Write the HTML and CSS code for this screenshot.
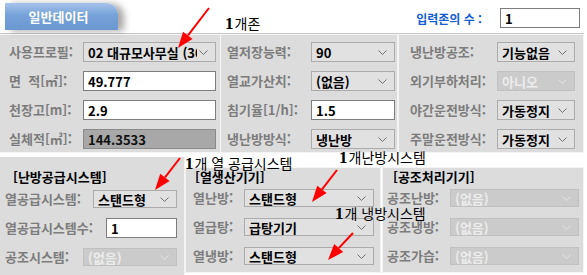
FILE: index.html
```html
<!DOCTYPE html>
<html lang="ko">
<head>
<meta charset="utf-8">
<title>일반데이터</title>
<link rel="stylesheet" href="styles.css">
</head>
<body>
<div class="page">
  <header class="top">
    <div class="tab">일반데이터</div>
    <div class="zone">
      <span class="zone-label">입력존의 수 :</span>
      <div class="field field-zone">1</div>
    </div>
  </header>

  <section class="main">
    <div class="col col1">
      <div class="row"><span class="lbl">사용프로필:</span><div class="sel"><span class="val">02 대규모사무실 (30</span><svg class="chev" viewBox="0 0 9 5"><polyline points="0.5,0.5 4.5,4.5 8.5,0.5"/></svg></div></div>
      <div class="row"><span class="lbl">면&nbsp;&nbsp;적[㎡]:</span><div class="field">49.777</div></div>
      <div class="row"><span class="lbl">천장고[m]:</span><div class="field">2.9</div></div>
      <div class="row"><span class="lbl">실체적[㎥]:</span><div class="field field-ro">144.3533</div></div>
    </div>
    <div class="col col2">
      <div class="row"><span class="lbl">열저장능력:</span><div class="sel"><span class="val">90</span><svg class="chev" viewBox="0 0 9 5"><polyline points="0.5,0.5 4.5,4.5 8.5,0.5"/></svg></div></div>
      <div class="row"><span class="lbl">열교가산치:</span><div class="sel"><span class="val">(없음)</span><svg class="chev" viewBox="0 0 9 5"><polyline points="0.5,0.5 4.5,4.5 8.5,0.5"/></svg></div></div>
      <div class="row"><span class="lbl">침기율[1/h]:</span><div class="field">1.5</div></div>
      <div class="row"><span class="lbl">냉난방방식:</span><div class="sel"><span class="val">냉난방</span><svg class="chev" viewBox="0 0 9 5"><polyline points="0.5,0.5 4.5,4.5 8.5,0.5"/></svg></div></div>
    </div>
    <div class="col col3">
      <div class="row"><span class="lbl">냉난방공조:</span><div class="sel"><span class="val">기능없음</span><svg class="chev" viewBox="0 0 9 5"><polyline points="0.5,0.5 4.5,4.5 8.5,0.5"/></svg></div></div>
      <div class="row"><span class="lbl">외기부하처리:</span><div class="sel sel-off"><span class="val">아니오</span><svg class="chev" viewBox="0 0 9 5"><polyline points="0.5,0.5 4.5,4.5 8.5,0.5"/></svg></div></div>
      <div class="row"><span class="lbl">야간운전방식:</span><div class="sel"><span class="val">가동정지</span><svg class="chev" viewBox="0 0 9 5"><polyline points="0.5,0.5 4.5,4.5 8.5,0.5"/></svg></div></div>
      <div class="row"><span class="lbl">주말운전방식:</span><div class="sel"><span class="val">가동정지</span><svg class="chev" viewBox="0 0 9 5"><polyline points="0.5,0.5 4.5,4.5 8.5,0.5"/></svg></div></div>
    </div>
  </section>

  <section class="lower">
    <div class="panel p1">
      <div class="ptitle">[난방공급시스템]</div>
      <div class="row r1"><span class="lbl">열공급시스템:</span><div class="sel"><span class="val">스탠드형</span><svg class="chev" viewBox="0 0 9 5"><polyline points="0.5,0.5 4.5,4.5 8.5,0.5"/></svg></div></div>
      <div class="row r2"><span class="lbl">열공급시스템수:</span><div class="field">1</div></div>
      <div class="row r3"><span class="lbl">공조시스템:</span><div class="sel sel-off"><span class="val">(없음)</span><svg class="chev" viewBox="0 0 9 5"><polyline points="0.5,0.5 4.5,4.5 8.5,0.5"/></svg></div></div>
    </div>
    <div class="panel p2">
      <div class="ptitle">[열생산기기]</div>
      <div class="row"><span class="lbl">열난방:</span><div class="sel"><span class="val">스탠드형</span><svg class="chev" viewBox="0 0 9 5"><polyline points="0.5,0.5 4.5,4.5 8.5,0.5"/></svg></div></div>
      <div class="row"><span class="lbl">열급탕:</span><div class="sel"><span class="val">급탕기기</span><svg class="chev" viewBox="0 0 9 5"><polyline points="0.5,0.5 4.5,4.5 8.5,0.5"/></svg></div></div>
      <div class="row"><span class="lbl">열냉방:</span><div class="sel"><span class="val">스탠드형</span><svg class="chev" viewBox="0 0 9 5"><polyline points="0.5,0.5 4.5,4.5 8.5,0.5"/></svg></div></div>
    </div>
    <div class="panel p3">
      <div class="ptitle">[공조처리기기]</div>
      <div class="row"><span class="lbl">공조난방:</span><div class="sel sel-off"><span class="val">(없음)</span><svg class="chev" viewBox="0 0 9 5"><polyline points="0.5,0.5 4.5,4.5 8.5,0.5"/></svg></div></div>
      <div class="row"><span class="lbl">공조냉방:</span><div class="sel sel-off"><span class="val">(없음)</span><svg class="chev" viewBox="0 0 9 5"><polyline points="0.5,0.5 4.5,4.5 8.5,0.5"/></svg></div></div>
      <div class="row"><span class="lbl">공조가습:</span><div class="sel sel-off"><span class="val">(없음)</span><svg class="chev" viewBox="0 0 9 5"><polyline points="0.5,0.5 4.5,4.5 8.5,0.5"/></svg></div></div>
    </div>
  </section>

  <div class="note note-zone"><span class="num">1</span>개존</div>
  <div class="note note-heat"><span class="num">1</span>개 열 공급시스템</div>
  <div class="note note-hsys"><span class="num">1</span>개난방시스템</div>
  <div class="note note-csys"><span class="num">1</span>개 냉방시스템</div>

  <svg class="arrows" viewBox="0 0 587 275" width="587" height="275">
    <g class="arrow">
      <line x1="209" y1="8" x2="188" y2="35.4"/>
      <polygon points="178,48 192.5,39.1 183.1,31.7"/>
    </g>
    <g class="arrow">
      <line x1="180" y1="158" x2="165" y2="177.4"/>
      <polygon points="155,190 169.6,181.1 160.2,173.7"/>
    </g>
    <g class="arrow">
      <line x1="337" y1="170" x2="322" y2="189.4"/>
      <polygon points="312,202 326.6,193.1 317.2,185.7"/>
    </g>
    <g class="arrow">
      <line x1="353" y1="233" x2="338.7" y2="248.1"/>
      <polygon points="328,260 343.2,252.1 334.2,244.1"/>
    </g>
  </svg>
</div>
</body>
</html>
```

FILE: styles.css
```css
html, body {
  margin: 0;
  padding: 0;
  background: #ffffff;
}
body {
  font-family: "Noto Sans CJK KR", "Noto Sans", sans-serif;
  font-size: 13px;
  overflow: hidden;
}
.page {
  position: relative;
  width: 587px;
  height: 275px;
  overflow: hidden;
}

/* header */
.top {
  display: flex;
  align-items: flex-start;
  height: 33px;
}
.tab {
  margin: 3px 0 0 5px;
  width: 113px;
  height: 27px;
  border-radius: 0 12px 0 0;
  background: linear-gradient(#a6c4ea, #76a2d8 45%, #6b98d2);
  box-shadow: 6px 1px 7px rgba(0, 0, 0, 0.35);
  color: #ffffff;
  font-weight: 700;
  font-size: 13px;
  line-height: 27px;
  text-align: center;
  padding-right: 6px;
  box-sizing: border-box;
}
.zone {
  margin-left: auto;
  margin-right: 7px;
  margin-top: 8px;
  display: flex;
  align-items: center;
}
.zone-label {
  color: #1560d0;
  font-weight: 700;
  font-size: 12px;
  margin-right: 18px;
}
.field-zone {
  width: 80px;
  height: 20px;
}

/* controls */
.row {
  display: flex;
  align-items: center;
  height: 20px;
}
.lbl {
  flex: none;
  color: #7c7c7c;
  font-weight: 700;
  white-space: nowrap;
  line-height: 20px;
}
.field, .sel {
  box-sizing: border-box;
  height: 20px;
  display: flex;
  align-items: center;
  font-weight: 700;
  color: #000000;
  white-space: nowrap;
}
.field {
  background: #ffffff;
  border: 1px solid #7d7d7d;
  padding-left: 4px;
}
.field-ro {
  background: #a8a8a8;
  border-color: #8a8a8a;
  color: #111111;
}
.sel {
  position: relative;
  background: #e1e1e1;
  border: 1px solid #ababab;
  padding-left: 4px;
  padding-right: 18px;
  overflow: hidden;
}
.sel .val {
  overflow: hidden;
  flex: 1;
}
.chev {
  position: absolute;
  right: 7px;
  top: 50%;
  margin-top: -2px;
  width: 9px;
  height: 5px;
  fill: none;
  stroke: #707070;
  stroke-width: 1;
}
.sel-off {
  background: #cbcbcb;
  border-color: #c0c0c0;
  color: #ececec;
}
.sel-off .chev {
  stroke: #e4e4e4;
}

/* main block */
.main {
  display: flex;
  width: 584px;
  height: 120px;
  box-sizing: border-box;
  background: #dcdcdc;
  border-top: 1px solid #c6c6c6;
}
.col {
  box-sizing: border-box;
  border: 1px solid #f4f4f4;
  padding-top: 7px;
  display: flex;
  flex-direction: column;
  gap: 9px;
}
.col1 {
  width: 221px;
  border-left: none;
  padding-left: 9px;
}
.col1 .lbl { width: 74px; }
.col1 .field, .col1 .sel { width: 133px; }

.col2 {
  width: 177px;
  border-left: none;
  padding-left: 6px;
}
.col2 .lbl { width: 84px; }
.col2 .field, .col2 .sel { width: 84px; }

.col3 {
  width: 186px;
  padding-left: 11px;
}
.col3 .lbl { width: 87px; }
.col3 .field, .col3 .sel { width: 78px; }

/* lower block */
.lower {
  display: flex;
  align-items: flex-start;
  margin-top: 4px;
  height: 118px;
}
.panel {
  box-sizing: border-box;
  background: #dcdcdc;
  display: flex;
  flex-direction: column;
}
.ptitle {
  color: #000000;
  font-weight: 700;
  line-height: 16px;
  height: 16px;
}
.p1 {
  width: 185px;
  height: 118px;
  border-right: 1px solid #f4f4f4;
  padding: 12px 0 0 5px;
}
.p1 .ptitle { margin: 0 0 4px 8px; }
.p1 .row { margin-bottom: 9px; }
.p1 .r1 .lbl { width: 88px; }
.p1 .r1 .sel { width: 84px; height: 18px; }
.p1 .r2 .lbl { width: 101px; }
.p1 .r2 .field { width: 71px; }
.p1 .r3 .lbl { width: 78px; }
.p1 .r3 .sel { width: 94px; height: 18px; }

.p2, .p3 {
  margin-top: 10px;
  height: 106px;
  border: 1px solid #f4f4f4;
  padding-top: 1px;
  gap: 9px;
}
.p2 .ptitle, .p3 .ptitle { margin-bottom: -6px; }
.p2 {
  width: 196px;
  padding-left: 7px;
}
.p2 .ptitle { margin-left: 2px; }
.p2 .lbl { width: 51px; }
.p2 .sel { width: 130px; height: 18px; }

.p3 {
  width: 202px;
  margin-left: 1px;
  padding-left: 4px;
}
.p3 .ptitle { margin-left: 6px; }
.p3 .lbl { width: 63px; }
.p3 .sel { width: 129px; height: 18px; }

/* annotations (overlay) */
.note {
  position: absolute;
  font-family: "Noto Sans CJK KR", sans-serif;
  font-size: 14px;
  line-height: 16px;
  color: #000000;
  white-space: nowrap;
}
.note .num {
  font-family: "Liberation Serif", serif;
  font-weight: 700;
  font-size: 17px;
  margin-right: 1px;
}
.note-zone { left: 225px; top: 15px; }
.note-heat { left: 185px; top: 155px; }
.note-hsys { left: 339px; top: 149px; }
.note-csys { left: 335px; top: 205px; }

.arrows {
  position: absolute;
  left: 0;
  top: 0;
  pointer-events: none;
}
.arrow line {
  stroke: #ff0000;
  stroke-width: 2;
}
.arrow polygon {
  fill: #ff0000;
}
```
